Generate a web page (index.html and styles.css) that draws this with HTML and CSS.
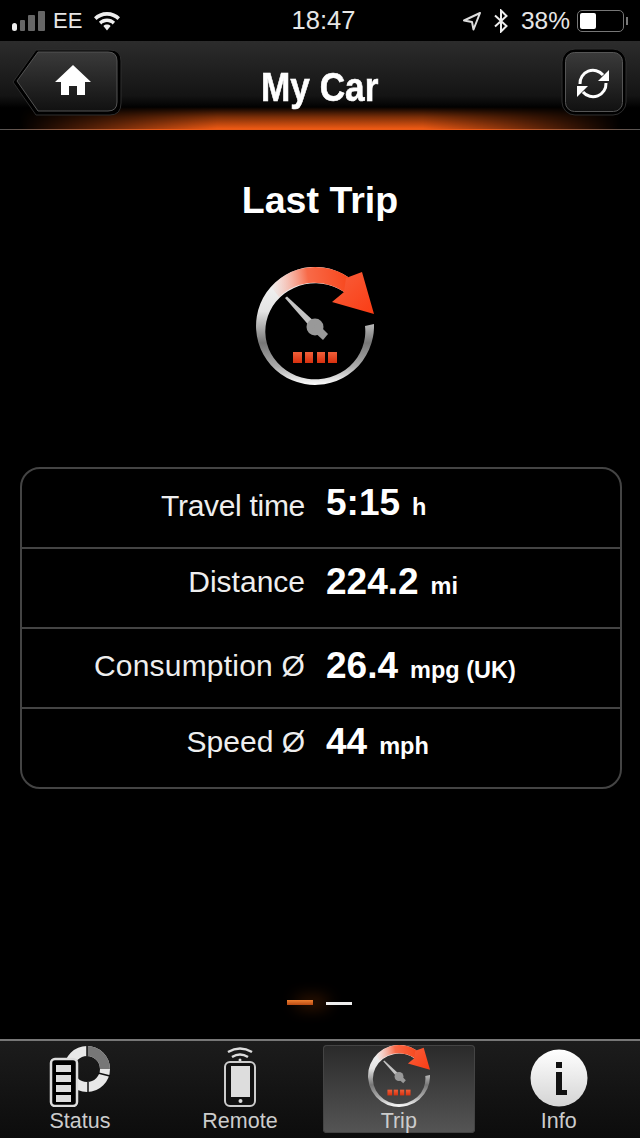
FILE: index.html
```html
<!DOCTYPE html>
<html lang="en">

<head>
	<meta charset="UTF-8">
	<title>My Car</title>
	<link rel="stylesheet" href="styles.css">
</head>

<body>
	<svg class="defs" aria-hidden="true">
		<defs>
			<linearGradient id="ring" gradientUnits="userSpaceOnUse" x1="85" y1="30" x2="85" y2="135">
				<stop offset="0" stop-color="#f4f4f4" />
				<stop offset=".3" stop-color="#e4e4e4" />
				<stop offset=".6" stop-color="#777" />
				<stop offset=".82" stop-color="#aaa" />
				<stop offset="1" stop-color="#fff" />
			</linearGradient>
			<linearGradient id="ring-tint" gradientUnits="userSpaceOnUse" x1="118" y1="30" x2="40" y2="40">
				<stop offset="0" stop-color="#f8481e" />
				<stop offset=".5" stop-color="#f86a48" />
				<stop offset="1" stop-color="#f8a898" stop-opacity="0" />
			</linearGradient>
			<linearGradient id="arrow" x1="0" y1="0" x2="1" y2="1">
				<stop offset="0" stop-color="#f8603c" />
				<stop offset="1" stop-color="#fa3c14" />
			</linearGradient>
			<linearGradient id="cell" x1="0" y1="0" x2="0" y2="1">
				<stop offset="0" stop-color="#f0603a" />
				<stop offset="1" stop-color="#d8300e" />
			</linearGradient>
			<linearGradient id="btn" x1="0" y1="0" x2="0" y2="1">
				<stop offset="0" stop-color="#3a3a3a" />
				<stop offset="1" stop-color="#111" />
			</linearGradient>
			<linearGradient id="disc" x1="0" y1="0" x2="0" y2="1">
				<stop offset="0" stop-color="#fff" />
				<stop offset="1" stop-color="#d4d4d4" />
			</linearGradient>
			<symbol id="gauge" viewBox="26 17 118 118">
				<path fill="url(#ring)" d="M144 74A59 59 0 1 1 118 27L118 45A50 48 0 1 0 135 76Z" />
				<path fill="url(#ring-tint)" d="M118 27A59 59 0 0 0 41 37L49 47A50 48 0 0 1 118 45Z" />
				<path fill="url(#arrow)" d="M132 22L144 64L102 52L114 42L116 28Z" />
				<path fill="#c4c4c4" d="M55 48L57 46.500L87 74L82 79Z" />
				<circle cx="85" cy="77" r="8.500" fill="#999" />
				<path fill="#999" d="M87 73L98 84L93 90L82 80Z" />
				<rect x="63" y="102" width="9" height="11" fill="url(#cell)" />
				<rect x="75" y="102" width="8" height="11" fill="url(#cell)" />
				<rect x="87" y="102" width="8" height="11" fill="url(#cell)" />
				<rect x="98" y="102" width="9" height="11" fill="url(#cell)" />
			</symbol>
		</defs>
	</svg>

	<div class="statusbar">
		<div class="status-left">
			<svg class="signal" width="33" height="22" viewBox="0 0 33 22">
				<rect x="0" y="13" width="5" height="8" rx="2.500" fill="#eee" />
				<rect x="8" y="10" width="5" height="11" rx="1" fill="#666" />
				<rect x="16" y="5" width="7" height="16" rx="1" fill="#666" />
				<rect x="26" y="1" width="7" height="20" rx="1" fill="#666" />
			</svg>
			<span class="carrier">EE</span>
			<svg class="wifi" width="28" height="20" viewBox="0 0 28 20">
				<path fill="#eee" d="M14 1C8.800 1 4.200 3 1 6.200L3.500 9C6.200 6.300 9.900 4.700 14 4.700S21.800 6.300 24.500 9L27 6.200C23.800 3 19.200 1 14 1Z" />
				<path fill="#eee" d="M14 7.500C10.900 7.500 8 8.700 5.900 10.800L8.300 13.400C9.800 12 11.800 11.100 14 11.100S18.200 12 19.700 13.400L22.100 10.800C20 8.700 17.100 7.500 14 7.500Z" />
				<path fill="#eee" d="M14 13.500C12.700 13.500 11.400 14 10.400 14.900L14 19.500L17.600 14.900C16.600 14 15.300 13.500 14 13.500Z" />
			</svg>
		</div>
		<div class="clock">18:47</div>
		<div class="status-right">
			<svg width="20" height="20" viewBox="0 0 20 20">
				<path fill="none" stroke="#ddd" stroke-width="2" stroke-linejoin="round" d="M18 2L2 9.500L10 11L11.500 18.500Z" />
			</svg>
			<svg class="bt" width="14" height="24" viewBox="0 0 14 24">
				<path fill="none" stroke="#eee" stroke-width="2" d="M1 6.500L12.500 17L7 22.500V1.500L12.500 7L1 17.500" />
			</svg>
			<span class="percent">38%</span>
			<div class="battery">
				<div class="battery-level"></div>
			</div>
			<div class="battery-nub"></div>
		</div>
	</div>

	<header class="nav">
		<svg class="home-btn" width="110" height="68" viewBox="12 48 110 68">
			<path fill="#000" stroke="#2e2e2e" stroke-width="1" d="M13 82L36 50H110Q121 50 121 61V103Q121 115 110 115H36Z" />
			<path fill="url(#btn)" stroke="#555" stroke-width="1" d="M17 81L38 52H108Q117 52 117 61V102Q117 111 108 111H38Z" />
			<path fill="#fff" d="M73 65L91 82H85V95H77V86H69V95H61V82H55Z" />
		</svg>
		<h1 class="nav-title"><span>My Car</span></h1>
		<svg class="refresh-btn" width="66" height="68" viewBox="561 48 66 68">
			<rect x="562" y="49" width="64" height="66" rx="13" fill="#000" stroke="#2e2e2e" />
			<rect x="565.500" y="52.500" width="57" height="59" rx="9" fill="url(#btn)" stroke="#555" />
			<path fill="none" stroke="#fff" stroke-width="3" d="M580 84A13 13 0 0 1 603 75" />
			<path fill="#fff" d="M609 70V81H598Z" />
			<path fill="none" stroke="#fff" stroke-width="3" d="M606 83A13 13 0 0 1 583 92" />
			<path fill="#fff" d="M577 97V86H588Z" />
		</svg>
	</header>

	<main class="content">
		<h2 class="page-title">Last Trip</h2>
		<svg class="trip-icon" width="118" height="118"><use href="#gauge" /></svg>

		<div class="trip-table">
			<div class="row row-a row-first">
				<span class="label">Travel time</span>
				<span class="value">5:15<small>h</small></span>
			</div>
			<div class="row row-b">
				<span class="label">Distance</span>
				<span class="value">224.2<small>mi</small></span>
			</div>
			<div class="row row-a">
				<span class="label label-wide">Consumption Ø</span>
				<span class="value">26.4<small>mpg (UK)</small></span>
			</div>
			<div class="row row-b">
				<span class="label">Speed Ø</span>
				<span class="value">44<small>mph</small></span>
			</div>
		</div>

		<div class="pager">
			<div class="dash dash-on"></div>
			<div class="dash"></div>
		</div>
	</main>

	<nav class="tabbar">
		<div class="tab">
			<svg class="tab-icon" width="64" height="62" viewBox="48 1045 64 62">
				<circle cx="87" cy="1069" r="18" fill="none" stroke="#e8e8e8" stroke-width="10" />
				<path fill="none" stroke="#777" stroke-width="10" d="M87 1051A18 18 0 0 1 105 1069" />
				<path stroke="#111" stroke-width="1.500" d="M87 1046V1056M98 1073L110 1076M88 1082V1093" />
				<rect x="51" y="1059" width="26" height="47" rx="4" fill="#000" stroke="#ddd" stroke-width="2.500" />
				<rect x="56" y="1065" width="15" height="7" fill="#ddd" />
				<rect x="56" y="1075" width="15" height="7" fill="#ddd" />
				<rect x="56" y="1085" width="15" height="7" fill="#ddd" />
				<rect x="56" y="1095" width="15" height="7" fill="#ddd" />
			</svg>
			<span>Status</span>
		</div>
		<div class="tab">
			<svg class="tab-icon" width="34" height="62" viewBox="223 1045 34 62">
				<path fill="none" stroke="#ddd" stroke-width="2.500" d="M228 1052Q240 1045 252 1052M232 1057Q240 1052 248 1057" />
				<circle cx="240" cy="1060" r="1.500" fill="#ddd" />
				<rect x="225" y="1062" width="30" height="44" rx="5" fill="#111" stroke="#ccc" stroke-width="2" />
				<rect x="231" y="1066" width="19" height="31" fill="#ddd" />
				<circle cx="240.500" cy="1101" r="2" fill="#ddd" />
			</svg>
			<span>Remote</span>
		</div>
		<div class="tab tab-active">
			<svg class="tab-icon" width="62" height="62"><use href="#gauge" /></svg>
			<span>Trip</span>
		</div>
		<div class="tab tab-info">
			<svg class="tab-icon" width="58" height="58" viewBox="0 0 58 58">
				<circle cx="29" cy="29" r="28.500" fill="url(#disc)" />
				<rect x="26" y="13" width="6" height="6" fill="#111" />
				<rect x="26" y="23" width="6" height="23" fill="#111" />
				<rect x="26" y="41" width="11" height="5" fill="#111" />
			</svg>
			<span>Info</span>
		</div>
	</nav>
</body>

</html>
```

FILE: styles.css
```css
html,
body {
	margin: 0;
	height: 1138px;
	background: #000;
	overflow: hidden;
}

body {
	display: flex;
	flex-direction: column;
	font-family: 'Liberation Sans', Arial, sans-serif;
	color: #fff;
}

.defs {
	position: absolute;
	width: 0;
	height: 0;
}

/* status bar */
.statusbar {
	height: 41px;
	display: grid;
	grid-template-columns: 1fr auto 1fr;
	align-items: center;
	padding: 0 12px;
	font-size: 23px;
	color: #e6e6e6;
}

.status-left,
.status-right {
	display: flex;
	align-items: center;
}

.status-right {
	justify-content: flex-end;
}

.carrier {
	margin-left: 8px;
	font-size: 22px;
}

.wifi {
	margin-left: 11px;
}

.clock {
	margin-left: 7px;
	font-size: 25.500px;
}

.bt {
	margin-left: 12px;
}

.percent {
	margin-left: 13px;
	font-size: 24.500px;
}

.battery {
	width: 47px;
	height: 22px;
	margin-left: 7px;
	padding: 2px;
	border: 1.500px solid #777;
	border-radius: 5px;
	box-sizing: border-box;
	flex-shrink: 0;
}

.battery-level {
	width: 16px;
	height: 100%;
	background: #fff;
	border-radius: 2px;
}

.battery-nub {
	width: 2px;
	height: 8px;
	margin-left: 2px;
	background: #777;
}

/* navigation */
.nav {
	position: relative;
	height: 89px;
	box-sizing: border-box;
	display: grid;
	grid-template-columns: 1fr auto 1fr;
	align-items: start;
	padding: 7px 13px 0 12px;
	background: linear-gradient(#2c2c2c, #141414 62%, #000 76%);
	border-bottom: 1px solid #555;
	border-image: linear-gradient(90deg, #555, #e85a18 25%, #e85a18 75%, #555) 1;
}

/* orange glow along the bottom edge */
.nav::after {
	content: '';
	position: absolute;
	left: 0;
	right: 0;
	bottom: 0;
	height: 22px;
	background: linear-gradient(rgba(90, 30, 0, 0), #7a2e08 45%, #f05a14);
	-webkit-mask-image: linear-gradient(90deg, transparent 3%, #000 34%, #000 66%, transparent 97%);
	mask-image: linear-gradient(90deg, transparent 3%, #000 34%, #000 66%, transparent 97%);
}

.home-btn,
.refresh-btn,
.nav-title {
	position: relative;
	z-index: 1;
}

.refresh-btn {
	justify-self: end;
}

.nav-title {
	margin: 18px 0 0;
	font-size: 40px;
	line-height: 42px;
	-webkit-text-stroke: .6px #fff;
}

.nav-title span {
	display: inline-block;
	transform: scaleX(.88);
}

/* trip page */
.content {
	flex: 1;
	display: flex;
	flex-direction: column;
	align-items: center;
}

.page-title {
	margin: 49px 0 0;
	font-size: 37.500px;
	line-height: 42px;
}

.trip-icon {
	margin: 46px 10px 0 0;
}

.trip-table {
	width: 602px;
	margin: 82px 18px 0 20px;
	box-sizing: border-box;
	border: 2px solid #444;
	border-radius: 20px;
}

.row {
	height: 80px;
	box-sizing: border-box;
	display: grid;
	grid-template-columns: 283px 1fr;
	column-gap: 21px;
	align-items: center;
	border-bottom: 2px solid #444;
}

.row:last-child {
	height: 78px;
	border-bottom: 0;
}

.row-a {
	padding-bottom: 4px;
}

.row-b {
	padding-bottom: 12px;
}

.row-first .label {
	letter-spacing: -.3px;
}

.row-first .value {
	margin-bottom: 6px;
}

.label {
	text-align: right;
	font-size: 30px;
	color: #eee;
	white-space: nowrap;
}

.label-wide {
	letter-spacing: .2px;
}

.value {
	font-size: 37px;
	font-weight: bold;
	white-space: nowrap;
}

.value small {
	margin-left: 12px;
	font-size: 23.500px;
}

.pager {
	margin: auto 2px 34px 0;
	display: flex;
	gap: 13px;
	align-items: flex-end;
}

.dash {
	width: 26px;
	height: 3px;
	background: #eee;
}

.dash-on {
	height: 5px;
	background: linear-gradient(#f08030, #b84a14);
	box-shadow: 12px 0 16px 2px rgba(150, 60, 0, .5);
}

/* tab bar */
.tabbar {
	height: 99px;
	box-sizing: border-box;
	display: grid;
	grid-template-columns: 160px 160px 1fr 1fr;
	padding: 4px 3px 6px 0;
	border-top: 2px solid #777;
	background: linear-gradient(#1c1c1c, #0c0c0c);
}

.tab {
	display: flex;
	flex-direction: column;
	align-items: center;
	justify-content: flex-end;
	gap: 2px;
	font-size: 21.500px;
	line-height: 24px;
	color: #ccc;
}

.tab-active {
	margin: 0 4px 0 3px;
	background: linear-gradient(#2a2a2a, #555);
	border-radius: 4px;
	box-shadow: inset 0 0 0 1px #444;
}

.tab-info {
	padding-left: 2px;
}

.tab-icon {
	flex-shrink: 0;
}
```
